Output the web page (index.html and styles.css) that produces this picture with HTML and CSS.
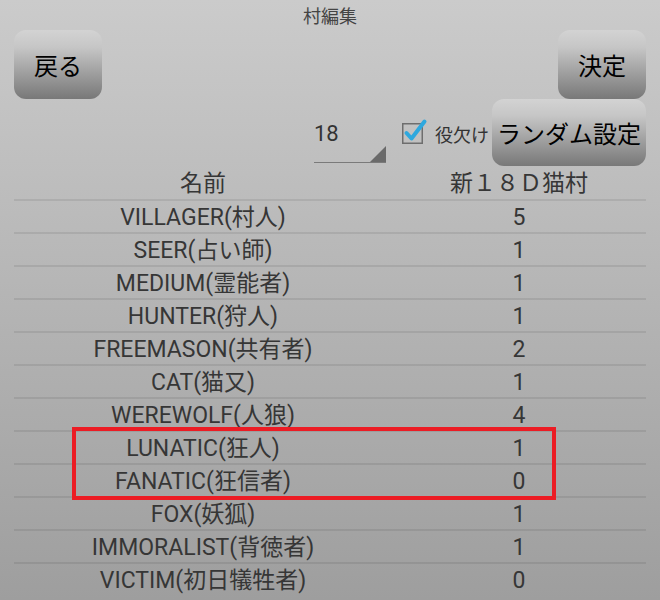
FILE: index.html
```html
<!DOCTYPE html>
<html lang="ja">
<head>
<meta charset="utf-8">
<title>村編集</title>
<link rel="stylesheet" href="styles.css">
</head>
<body>
<div class="title">村編集</div>
<div class="topbar">
  <button class="btn btn-square">戻る</button>
  <button class="btn btn-square">決定</button>
</div>
<div class="controls">
  <div class="spinner">
    <span class="spinner-value">18</span>
    <svg class="spinner-arrow" width="16" height="16" viewBox="0 0 16 16"><polygon points="16,0 16,16 0,16" fill="#6a6a6a"/></svg>
  </div>
  <div class="check">
    <svg class="check-box" width="28" height="28" viewBox="0 0 28 28">
      <rect x="1.75" y="6.75" width="19.5" height="19.5" fill="none" stroke="#6e6e6e" stroke-width="1.5"/>
      <polyline points="5.5,16 10.5,21.5 23.5,4.5" fill="none" stroke="#2ea8de" stroke-width="4" stroke-linecap="round" stroke-linejoin="round"/>
    </svg>
    <span class="check-label">役欠け</span>
  </div>
  <button class="btn btn-wide">ランダム設定</button>
</div>
<div class="table">
  <div class="row head"><span>名前</span><span>新１８Ｄ猫村</span></div>
  <div class="row"><span>VILLAGER(村人)</span><span>5</span></div>
  <div class="row"><span>SEER(占い師)</span><span>1</span></div>
  <div class="row"><span>MEDIUM(霊能者)</span><span>1</span></div>
  <div class="row"><span>HUNTER(狩人)</span><span>1</span></div>
  <div class="row"><span>FREEMASON(共有者)</span><span>2</span></div>
  <div class="row"><span>CAT(猫又)</span><span>1</span></div>
  <div class="row"><span>WEREWOLF(人狼)</span><span>4</span></div>
  <div class="row"><span>LUNATIC(狂人)</span><span>1</span></div>
  <div class="row"><span>FANATIC(狂信者)</span><span>0</span></div>
  <div class="row"><span>FOX(妖狐)</span><span>1</span></div>
  <div class="row"><span>IMMORALIST(背徳者)</span><span>1</span></div>
  <div class="row"><span>VICTIM(初日犠牲者)</span><span>0</span></div>
  <div class="highlight"></div>
</div>
</body>
</html>
```
FILE: styles.css
```css
html, body {
  margin: 0;
  padding: 0;
  height: 600px;
  overflow: hidden;
}
body {
  background: linear-gradient(#cbcbcb, #9e9e9e);
  font-family: Roboto, "Noto Sans CJK JP", sans-serif;
  color: #363636;
}
.title {
  height: 30px;
  line-height: 34px;
  font-size: 18px;
  text-align: center;
  color: #444;
}
.topbar {
  display: flex;
  justify-content: space-between;
  padding: 0 14px;
  height: 69px;
}
.btn {
  border: none;
  border-radius: 12px;
  background: linear-gradient(#d3d3d3 0%, #c6c6c6 25%, #787878 100%);
  color: #000;
  font-family: Roboto, "Noto Sans CJK JP", sans-serif;
  font-size: 24px;
  padding: 0;
  margin: 0;
}
.btn-square {
  width: 88px;
  height: 69px;
}
.controls {
  display: flex;
  height: 67px;
  padding-left: 314px;
  padding-right: 14px;
}
.spinner {
  display: flex;
  justify-content: space-between;
  width: 72px;
  height: 40px;
  margin-top: 23px;
  border-bottom: 1px solid #7a7a7a;
  box-sizing: content-box;
}
.spinner-value {
  align-self: flex-start;
  font-size: 22px;
  line-height: 24px;
  color: #333;
}
.spinner-arrow {
  align-self: flex-end;
}
.check {
  display: flex;
  align-items: flex-start;
  margin-left: 15px;
  margin-top: 18px;
  width: 90px;
}
.check-box {
  flex: none;
}
.check-label {
  margin-left: 6px;
  margin-top: 8px;
  font-size: 18px;
  line-height: 22px;
  color: #333;
  white-space: nowrap;
}
.btn-wide {
  margin-left: auto;
  width: 154px;
  height: 67px;
}
.table {
  position: relative;
  margin: 0 14px;
}
.row {
  display: grid;
  grid-template-columns: 378px 1fr;
  height: 31px;
  line-height: 33px;
  border-top: 2px solid rgba(0, 0, 0, 0.08);
  font-size: 23px;
  text-align: center;
  white-space: nowrap;
}
.row.head {
  height: 33px;
  line-height: 36px;
  border-top: none;
}
.highlight {
  position: absolute;
  left: 58px;
  top: 261px;
  width: 484px;
  height: 73px;
  border: 4px solid #ec1c24;
  box-sizing: border-box;
}
```
